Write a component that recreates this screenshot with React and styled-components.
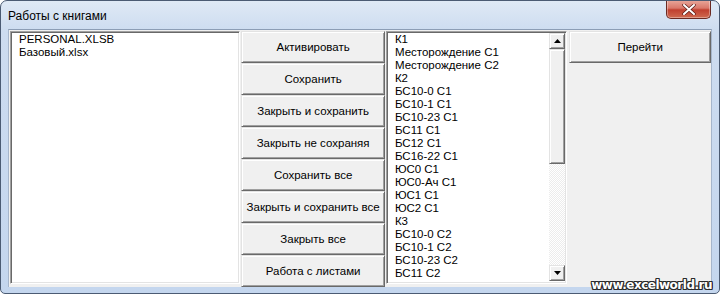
import React from "react";
import styled, { createGlobalStyle } from "styled-components";

const books = ["PERSONAL.XLSB", "Базовый.xlsx"];

const actions = [
  "Активировать",
  "Сохранить",
  "Закрыть и сохранить",
  "Закрыть не сохраняя",
  "Сохранить все",
  "Закрыть и сохранить все",
  "Закрыть все",
  "Работа с листами",
];

const sheets = [
  "К1",
  "Месторождение С1",
  "Месторождение С2",
  "К2",
  "БС10-0 С1",
  "БС10-1 С1",
  "БС10-23 С1",
  "БС11 С1",
  "БС12 С1",
  "БС16-22 С1",
  "ЮС0 С1",
  "ЮС0-Ач С1",
  "ЮС1 С1",
  "ЮС2 С1",
  "К3",
  "БС10-0 С2",
  "БС10-1 С2",
  "БС10-23 С2",
  "БС11 С2",
];

const App = () => {
  return (
    <>
      <GlobalStyle />
      <Window>
        <TitleBar>
          <Title>Работы с книгами</Title>
          <CloseButton>
            <svg width="14" height="11" viewBox="0 0 14 11">
              <path d="M2 1 L12 10 M12 1 L2 10" stroke="#5a1c16" strokeWidth="3.4" strokeLinecap="round" />
              <path d="M2 1 L12 10 M12 1 L2 10" stroke="#ffffff" strokeWidth="2" strokeLinecap="round" />
            </svg>
          </CloseButton>
        </TitleBar>
        <Client>
          <ListBox width={231}>
            <Items>
              {books.map((b) => (
                <Item key={b}>{b}</Item>
              ))}
            </Items>
          </ListBox>
          <ButtonColumn>
            {actions.map((a) => (
              <Button key={a}>{a}</Button>
            ))}
          </ButtonColumn>
          <ListBox width={182}>
            <Items>
              {sheets.map((s) => (
                <Item key={s}>{s}</Item>
              ))}
            </Items>
            <ScrollBar>
              <ArrowButton>
                <svg width="7" height="4" viewBox="0 0 7 4">
                  <path d="M3.5 0 L7 4 L0 4 Z" fill="#000" />
                </svg>
              </ArrowButton>
              <Thumb />
              <Track />
              <ArrowButton>
                <svg width="7" height="4" viewBox="0 0 7 4">
                  <path d="M0 0 L7 0 L3.5 4 Z" fill="#000" />
                </svg>
              </ArrowButton>
            </ScrollBar>
          </ListBox>
          <SideColumn>
            <Button>Перейти</Button>
          </SideColumn>
        </Client>
        <Watermark>www.excelworld.ru</Watermark>
      </Window>
    </>
  );
};

const GlobalStyle = createGlobalStyle`
  html, body {
    margin: 0;
    padding: 0;
    background: #ffffff;
  }
  body {
    font-family: "Liberation Sans", Arial, sans-serif;
  }
`;

const Window = styled.div`
  position: relative;
  width: 720px;
  height: 294px;
  box-sizing: border-box;
  display: flex;
  flex-direction: column;
  padding: 0 7px 6px 7px;
  background: linear-gradient(180deg, #dfe9f5 0px, #cddcf0 30px, #c4d6ee 100%);
  border: 1px solid #4b5b73;
  border-radius: 7px 7px 5px 5px;
  overflow: hidden;
`;

const TitleBar = styled.div`
  height: 28px;
  display: flex;
  align-items: flex-start;
  justify-content: space-between;
`;

const Title = styled.div`
  padding-top: 8px;
  font-size: 12px;
  color: #000000;
`;

const CloseButton = styled.div`
  width: 43px;
  height: 18px;
  margin-top: -1px;
  margin-right: 1px;
  display: flex;
  align-items: center;
  justify-content: center;
  border: 1px solid #6b2a22;
  border-top: none;
  border-radius: 0 0 5px 5px;
  background: linear-gradient(180deg, #e9a99c 0%, #d9786a 45%, #c0402f 55%, #cf6a50 100%);
  box-shadow: inset 0 0 0 1px rgba(255, 255, 255, 0.35);
`;

const Client = styled.div`
  flex: 1;
  display: flex;
  align-items: flex-start;
  gap: 1px;
  padding: 1px 0 0 1px;
  background: #f0f0f0;
  border: 1px solid #a6b6cc;
  border-top-color: #8c9db5;
  border-bottom: none;
`;

const ListBox = styled.div`
  width: ${(p) => p.width}px;
  height: 253px;
  box-sizing: border-box;
  display: flex;
  background: #ffffff;
  border-top: 1px solid #a0a0a0;
  border-left: 1px solid #a0a0a0;
  border-right: 1px solid #ffffff;
  border-bottom: 1px solid #ffffff;
  box-shadow: inset 1px 1px 0 #696969, inset -1px -1px 0 #e3e3e3;
`;

const Items = styled.div`
  flex: 1;
  padding: 1px 0 0 8px;
  overflow: hidden;
`;

const Item = styled.div`
  height: 13px;
  line-height: 13px;
  font-size: 11.5px;
  color: #000000;
  white-space: nowrap;
`;

const ScrollBar = styled.div`
  width: 16px;
  margin: 1px 1px 2px 0;
  display: flex;
  flex-direction: column;
`;

const raised = `
  box-sizing: border-box;
  background: #f0f0f0;
  border-top: 1px solid #e3e3e3;
  border-left: 1px solid #e3e3e3;
  border-right: 1px solid #696969;
  border-bottom: 1px solid #696969;
  box-shadow: inset 1px 1px 0 #ffffff, inset -1px -1px 0 #a0a0a0;
`;

const ArrowButton = styled.div`
  ${raised}
  height: 16px;
  display: flex;
  align-items: center;
  justify-content: center;
`;

const Thumb = styled.div`
  ${raised}
  height: 115px;
`;

const Track = styled.div`
  flex: 1;
  background: repeating-conic-gradient(#ffffff 0% 25%, #ececec 0% 50%) 0 0 / 2px 2px;
`;

const ButtonColumn = styled.div`
  width: 144px;
  display: flex;
  flex-direction: column;
`;

const SideColumn = styled.div`
  width: 142px;
  margin-left: 1px;
  display: flex;
  flex-direction: column;
`;

const Button = styled.div`
  ${raised}
  height: 32px;
  display: flex;
  align-items: center;
  justify-content: center;
  font-size: 11.5px;
  color: #000000;
  white-space: nowrap;
`;

const Watermark = styled.div`
  position: absolute;
  right: 7px;
  bottom: 1px;
  font-family: "DejaVu Sans", "Liberation Sans", sans-serif;
  font-weight: bold;
  font-size: 12px;
  letter-spacing: -0.5px;
  color: #ffffff;
  text-shadow: -1px -1px 0 #2a2a2a, 1px -1px 0 #2a2a2a, -1px 1px 0 #2a2a2a, 1px 1px 0 #2a2a2a,
    0 1px 0 #2a2a2a, 0 -1px 0 #2a2a2a, 1px 0 0 #2a2a2a, -1px 0 0 #2a2a2a;
`;

export default App;
